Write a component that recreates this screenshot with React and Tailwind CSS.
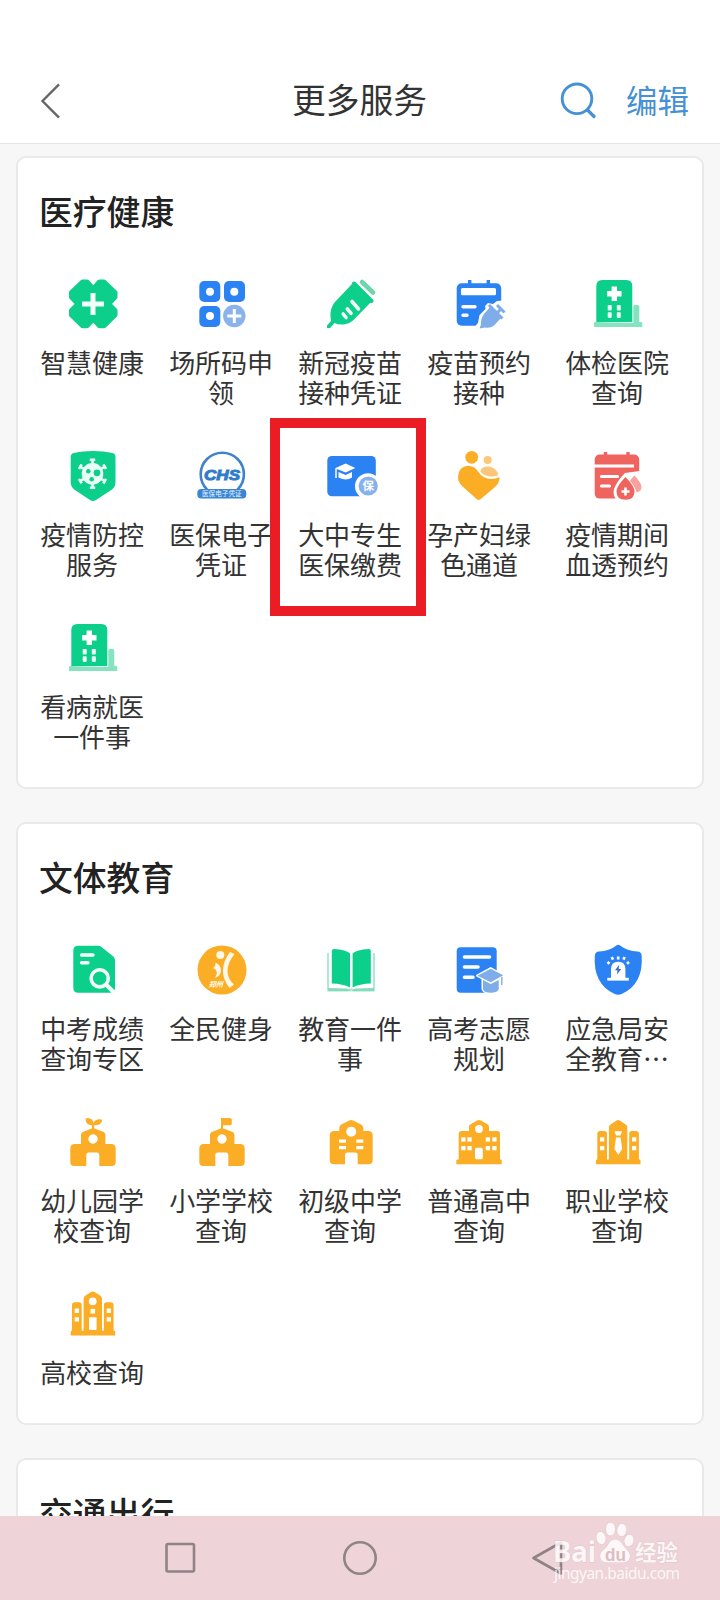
import React from 'react';

const G = '#0ccf8b';
const B = '#2b83f3';
const L = '#8ab3ec';
const O = '#fbad25';
const R = '#f0645f';

const Clover = () => (
  <>
    <path
      d="M20.500 8H25l6.300 7L37.500 8H42L53 18.500V23L46.500 30l6.500 6.500V41L42 51.700h-4.500L31.300 45 25 51.700h-4.500L9.500 41v-4.500L16 30l-6.500-7v-4.500z"
      fill={G} stroke={G} strokeWidth="5" strokeLinejoin="round"
    />
    <path d="M31 19v22M20 30h22" stroke="#f2fffa" strokeWidth="5" />
  </>
);

const CodeGrid = () => (
  <>
    <g fill={B}>
      <rect x="8.300" y="7" width="21" height="21" rx="5" />
      <rect x="33" y="7" width="21" height="21" rx="5" />
      <rect x="8.300" y="32" width="21" height="21" rx="5" />
    </g>
    <circle cx="43.300" cy="42" r="11.200" fill={L} />
    <g fill="#fff">
      <circle cx="19" cy="17.700" r="4" />
      <circle cx="43.300" cy="17.700" r="4" />
      <circle cx="19" cy="42" r="4" />
    </g>
    <path d="M43.300 35v14M36.300 42h14" stroke="#fff" strokeWidth="3" />
  </>
);

const Syringe = () => (
  <>
    <path d="M32 10L14.500 28.500Q10 34 10.500 43L11 47 7 51.500V54h3l4.500-5Q18 51 24 50.500 29 50 33 46.500L51 28z" fill={G} />
    <path d="M34 9.500L51.500 27" stroke={G} strokeWidth="4" strokeLinecap="round" />
    <path d="M42 8L53 18.500" stroke="#6fd3ab" strokeWidth="4.600" strokeLinecap="round" />
    <path d="M32 27.500l6.500 7.500M27.300 34.800l3.700 4.500M23.200 40l2.800 3.500" stroke="#f2fffa" strokeWidth="3.600" strokeLinecap="round" />
  </>
);

const CalendarShot = () => (
  <>
    <rect x="7.700" y="9.300" width="44.500" height="42.500" rx="5" fill={B} />
    <path d="M20.700 6v6M39.300 6v6" stroke={B} strokeWidth="3.400" />
    <rect x="12" y="14" width="35" height="7.300" rx="1.500" fill="#fff" />
    <path d="M14 32.700h12M14 41.300h4" stroke="#fff" strokeWidth="3.400" strokeLinecap="round" />
    <path d="M54 26.500l-6 .5-4 3-5-1-3 3 .5 3-6 6-1.500 8-4 4.500 1 3 29-2z" fill="#fff" />
    <path d="M41.500 32.500L52.500 43.500l-6.500 7Q42 54.500 36 53.500L30.500 54.500l1.500-4Q31.500 45 35 40z" fill="#7fadea" />
    <path d="M40 31l13.500 13.500M47.500 39.500l4.500-4.500M48 31l7.500 7.500" stroke="#7fadea" strokeWidth="3" />
  </>
);

const Hospital = () => (
  <>
    <path d="M46.300 49V32.500q0-1.500 1.500-1.500h3q1.500 0 1.500 1.500V48H54q1.300 0 1.300 1.300V53H7v-3.700Q7 48 8.300 48z" fill="#86e3c0" />
    <path d="M9.300 48V12q0-6 6-6h24q6 0 6 6v36z" fill={G} />
    <path d="M27.300 12.500v14.400M20.100 19.700h14.400" stroke="#fff" strokeWidth="5.400" />
    <g fill="#eafff6">
      <rect x="20.700" y="31" width="4" height="5.600" rx=".8" />
      <rect x="29.800" y="31" width="4" height="5.600" rx=".8" />
      <rect x="20.700" y="38.300" width="4" height="5.600" rx=".8" />
      <rect x="29.800" y="38.300" width="4" height="5.600" rx=".8" />
    </g>
  </>
);

const VirusShield = () => (
  <>
    <path d="M31 5C38 5 45 5.800 50.500 7q3 .8 3 4v25q0 5-3.500 7.500L34 54q-3 2-6 0L12.200 43.500Q8.700 41 8.700 36V11Q8.700 7.800 11.700 7C17 5.800 24 5 31 5z" fill={G} />
    <g stroke="#e9fff6" strokeWidth="2.600">
      <path d="M30.500 13.500v28.600M18.500 20.800l24 14M18.500 34.800l24-14" />
      <path d="M27.800 13.800h5.400M27.800 41.800h5.400M17 23l2.600-4.600M41.400 37.500l2.600-4.600M17 32.800l2.600 4.600M41.400 18.300l2.600 4.600" />
    </g>
    <circle cx="30.500" cy="27.800" r="10.800" fill="#e9fff6" />
    <circle cx="26.300" cy="25.300" r="2.300" fill={G} />
    <circle cx="35" cy="26.800" r="3.400" fill={G} />
    <circle cx="29.700" cy="33.300" r="2.300" fill={G} />
  </>
);

const Chs = () => (
  <>
    <circle cx="31.300" cy="28.300" r="21.600" fill="none" stroke="#3f83cb" strokeWidth="2.600" />
    <text x="13" y="34" fontSize="15" fontWeight="700" fontStyle="italic" textLength="36" lengthAdjust="spacingAndGlyphs" fill="#2f7cc9" stroke="#2f7cc9" strokeWidth="1" className="font-['Liberation_Sans',sans-serif]">CHS</text>
    <rect x="6.300" y="43" width="49" height="9.600" rx="4" fill="#3b86d3" />
    <text x="11" y="50.300" fontSize="6.600" textLength="39.600" fill="#e8f3ff">医保电子凭证</text>
  </>
);

const StudentCard = () => (
  <>
    <rect x="7.300" y="10" width="48.500" height="40.300" rx="4.500" fill={B} />
    <circle cx="48" cy="40.200" r="13" fill="#fff" />
    <circle cx="48.200" cy="40" r="9.600" fill="#86b1ee" />
    <text x="48.200" y="44.300" fontSize="11.500" fontWeight="700" textAnchor="middle" fill="#fff">保</text>
    <path d="M15 22.300l10.700-4.800L35.300 22l-9.600 4.400z" fill="#fff" />
    <path d="M18.500 26l7.200 3 6.300-3v5.500q-6 4-13.500 0z" fill="#fff" />
    <path d="M16 22.500V32" stroke="#fff" strokeWidth="1.500" />
  </>
);

const Maternal = () => (
  <>
    <circle cx="22.700" cy="11.300" r="6.400" fill={O} />
    <circle cx="38.700" cy="14" r="4" fill="#fcc878" />
    <path d="M31.300 25.500Q32.500 20 40 20.500 47.500 21.500 49.200 29 46 31 41.500 30.500 35 30 31.300 25.500z" fill="#fbc679" />
    <path d="M9 31Q9.300 20.500 19 19.700 25.500 19.700 29.500 26 34 33 42 33 46.500 33 50.700 31.300 50.500 37 46 41L31.500 53.300q-1.800 1.400-3.600 0L13.500 40.500Q9 36.500 9 31z" fill={O} />
  </>
);

const Dialysis = () => (
  <>
    <rect x="7.700" y="8.600" width="44.500" height="44" rx="5" fill={R} />
    <path d="M18.500 6v6M41 6v6" stroke={R} strokeWidth="3.400" />
    <path d="M7 20h40" stroke="#fff" strokeWidth="3" />
    <path d="M14.500 30.500h16M14.500 40h8" stroke="#fff" strokeWidth="3.200" strokeLinecap="round" />
    <path d="M38 27l7-1 8-1 4 16-6 14H31q-6-5-4-12 3-8 11-16z" fill="#fff" />
    <path d="M47.500 29.500q7 7.500 7 11.500 0 5-5 5-2.500-7-6.500-11 1.500-3 4.500-5.500z" fill="#f7a29e" />
    <path d="M38.500 31q9 9 9 14.500 0 8.300-9 8.300t-9-8.300Q29.500 40 38.500 31z" fill={R} />
    <path d="M38.500 41.500v8M34.500 45.500h8" stroke="#fff" strokeWidth="2.600" />
  </>
);

const ScoreSearch = () => (
  <>
    <path d="M11.300 10.700q0-5 5-5H36q2 0 3.500 1.300L51 16.200q2 1.500 2 4v28q0 4.500-4.500 4.500H16.300q-5 0-5-5z" fill={G} />
    <path d="M19.500 15h11.500M19.500 22.700H26" stroke="#f2fffa" strokeWidth="3.400" strokeLinecap="round" />
    <circle cx="37.700" cy="38.300" r="8.600" fill="none" stroke="#f2fffa" strokeWidth="3.600" />
    <path d="M44 44.500l8 8" stroke="#f2fffa" strokeWidth="4" />
  </>
);

const Fitness = () => (
  <>
    <circle cx="31" cy="30" r="24.500" fill={O} />
    <circle cx="29.300" cy="15" r="4" fill="#fff8e6" />
    <path d="M39 12l4.500 2Q36.500 23 36.500 31t6.500 13.500L38.500 48Q31.500 39 32 30q.5-10 7-18z" fill="#fff8e6" />
    <path d="M24.500 22.500q6 3 5.500 8.500-.5 5-6 7 2.500-4 1.500-7-1-2-3.500-3 3-2 2.500-5.500z" fill="#fff8e6" />
    <text x="17.500" y="46.500" fontSize="7.500" fontWeight="700" fontStyle="italic" textLength="14.500" fill="#fff8e6">郑州</text>
  </>
);

const Book = () => (
  <>
    <path d="M8 13v37.300h19.500q3.500 0 3.500-2 0 2 3.500 2H54V13" fill="none" stroke="#a5e8d0" strokeWidth="1.800" />
    <path d="M8 48l19 .5 4 2.500 4-2.500 19-.5v3.300H8z" fill="#84dcbc" />
    <path d="M11.800 10.500Q11.800 9 14 9q12 .8 16 4.500V47.500Q23 43.800 11.800 43.500z" fill={G} />
    <path d="M50.800 10.500Q50.800 9 48.600 9q-12 .8-16 4.500V47.500Q39.600 43.800 50.800 43.500z" fill={G} />
  </>
);

const Volunteer = () => (
  <>
    <rect x="7.700" y="7.300" width="40" height="45.400" rx="4" fill={B} />
    <path d="M15.500 17h25M15.500 27h13.500M15.500 37.300h8.500" stroke="#fff" strokeWidth="3.600" strokeLinecap="round" />
    <path d="M28 35.700l13.700-7.600L54 35l-4.500 3.500V49q-1 4-8 4t-8-4V38.500z" fill="#fff" stroke="#fff" strokeWidth="2" strokeLinejoin="round" />
    <path d="M34 40l7.700 4 8-4v9.500Q48 52.700 41.700 52.700T34 49.500z" fill="#7fadea" />
    <path d="M28.500 35.700l13.200-7 12.500 6.500-12.500 7z" fill="#7fadea" />
    <path d="M52.800 37v8" stroke="#7fadea" strokeWidth="1.400" />
  </>
);

const SirenShield = () => (
  <>
    <path d="M31.200 4.700q1 0 2.300 1 6.500 5.200 17 5.800 2 .1 3 1.200 1 1.100 1.200 3 1.800 28-19.500 38-2 1-4 1t-4-1Q6 43.700 7.800 15.700q.2-1.900 1.200-3t3-1.200q10.500-.6 17-5.800 1.200-1 2.200-1z" fill={B} />
    <path d="M24 38v-9q0-7.300 7.200-7.300T38.400 29v9z" fill="#fff" />
    <path d="M20.300 39.200h21.500" stroke="#fff" strokeWidth="2.800" />
    <path d="M31.200 16.500v3M24.700 17l1.300 2.600M37.700 17l-1.300 2.600M20.500 22l2 1.800M42 22l-2 1.800" stroke="#fff" strokeWidth="2.600" />
    <path d="M32 25l-4 5.300h2.500L30 34.500l4.300-5.600h-2.600z" fill="#3572c4" />
  </>
);

const SchoolBody = () => (
  <path
    fillRule="evenodd"
    d="M19 32V23q0-2 1.700-3l9-3.600q1.500-.6 3 0l9 3.600q1.700 1 1.700 3v9h5.800q4.500 0 4.500 4.500V50q0 4-4 4H37.300V43q0-2.500-2.500-2.500h-8q-2.500 0-2.500 2.500v11H12.300q-4 0-4-4V36.500Q8.300 32 12.800 32zM31 22.300a4.700 4.700 0 1 0 .01 0z"
    fill={O}
  />
);

const Kindergarten = () => (
  <>
    <SchoolBody />
    <path d="M31 18v-6" stroke={O} strokeWidth="2" />
    <path d="M31.500 13Q24 14 23.500 7.500 23.500 6 25.500 6q5.500.3 6 5 1.500-4 7-3.700 2 .2 1.500 2Q38 14 31.500 13z" fill={O} />
  </>
);

const Primary = () => (
  <>
    <SchoolBody />
    <path d="M31 18V6" stroke={O} strokeWidth="2" />
    <rect x="30.300" y="6" width="10.500" height="7.200" rx="1.800" fill={O} />
  </>
);

const Junior = () => (
  <>
    <path
      fillRule="evenodd"
      d="M19.300 19v-3q0-2.500 2-3.500l8-4q1.900-.9 3.800 0l8 4q2.200 1 2.200 3.500v3h4.900q4.500 0 4.500 4.500V48q0 4.300-4.300 4.300H37.700V43q0-2.500-2.500-2.500h-7.700Q25 40.500 25 43v9.300H14Q9.700 52.300 9.700 48V23.500Q9.700 19 14.200 19zM31.200 14.700a5 5 0 1 0 .01 0z"
      fill={O}
    />
    <path d="M19 29.200h7M36.300 29.200h7M19 35.700h7M36.300 35.700h7" stroke="#fff" strokeWidth="3.200" />
  </>
);

const Senior = () => (
  <>
    <path d="M20 19v-4q0-2 1.600-2.800L28 8.600q2-1 4 0l6.400 3.600Q40 13 40 15v4h8q3 0 3 3v25.500h.7q1 0 1 1v3.800H7.300v-3.800q0-1 1-1h1.400V22q0-3 3-3z" fill={O} />
    <circle cx="30" cy="17" r="3.900" fill="#fff" />
    <g fill="#fff">
      <rect x="12.200" y="25.300" width="4.300" height="4.300" />
      <rect x="18.400" y="25.300" width="4.300" height="4.300" />
      <rect x="36.700" y="25.300" width="4.300" height="4.300" />
      <rect x="43.300" y="25.300" width="4.300" height="4.300" />
      <rect x="12.200" y="34" width="4.300" height="4.300" />
      <rect x="18.400" y="34" width="4.300" height="4.300" />
      <rect x="36.700" y="34" width="4.300" height="4.300" />
      <rect x="43.300" y="34" width="4.300" height="4.300" />
      <rect x="26" y="35.700" width="7.800" height="11.600" rx="1.500" />
    </g>
  </>
);

const Towers = () => (
  <>
    <path d="M10.300 47.500V22q0-3 3-3h4q2.700 0 2.700 3v25.500h1.900V15.500q0-2 1.600-3l5.700-3.800q1.900-1.200 3.800 0l5.700 3.800q1.600 1 1.600 3v32h1.900V22q0-3 2.700-3h4q3 0 3 3v25.500h.6q1 0 1 1v3.800H9v-3.800q0-1 1-1z" fill={O} />
    <path d="M13 25.300h4.300v4.300H13zM13 34h4.300v4.300H13zM45 25.300h4.300v4.300H45zM45 34h4.300v4.300H45z" fill="#fff" />
  </>
);

const Vocational = () => (
  <>
    <Towers />
    <path d="M27.500 19.300h7.600L33.500 23.400h-4.400zM29 25.500h4.600l1.600 11.500-3.900 6-3.900-6z" fill="#fff" />
  </>
);

const University = () => (
  <g transform="translate(-.3 -.7)">
    <Towers />
    <circle cx="31" cy="18" r="3.900" fill="#fff" />
    <path d="M28.800 25.600h4.600v4.600h-4.600z" fill="#fff" />
    <rect x="27.300" y="34" width="7.600" height="12.700" rx="1" fill="#fff" />
  </g>
);

const medical = [
  { icon: Clover, label: '智慧健康' },
  { icon: CodeGrid, label: '场所码申领' },
  { icon: Syringe, label: '新冠疫苗接种凭证' },
  { icon: CalendarShot, label: '疫苗预约接种' },
  { icon: Hospital, label: '体检医院查询' },
  { icon: VirusShield, label: '疫情防控服务' },
  { icon: Chs, label: '医保电子凭证' },
  { icon: StudentCard, label: '大中专生医保缴费', marked: true },
  { icon: Maternal, label: '孕产妇绿色通道' },
  { icon: Dialysis, label: '疫情期间血透预约' },
  { icon: Hospital, label: '看病就医一件事' },
];

const education = [
  { icon: ScoreSearch, label: '中考成绩查询专区' },
  { icon: Fitness, label: '全民健身' },
  { icon: Book, label: '教育一件事' },
  { icon: Volunteer, label: '高考志愿规划' },
  { icon: SirenShield, label: '应急局安全教育⋯' },
  { icon: Kindergarten, label: '幼儿园学校查询' },
  { icon: Primary, label: '小学学校查询' },
  { icon: Junior, label: '初级中学查询' },
  { icon: Senior, label: '普通高中查询' },
  { icon: Vocational, label: '职业学校查询' },
  { icon: University, label: '高校查询' },
];

function Service({ icon: Icon, label, marked }) {
  return (
    <div className="relative flex flex-col items-center">
      <svg width="61" height="60" viewBox="0 0 61 60" className="block shrink-0">
        <Icon />
      </svg>
      <div className="mb-px mr-px mt-[13px] w-[105px] break-all text-center text-[26px] leading-[30px] tracking-[-0.1px] text-[#333]">{label}</div>
      {marked && <div className="absolute -left-4 -top-7 z-10 h-[198px] w-[156px] border-[10px] border-[#ea1c24]" />}
    </div>
  );
}

function Section({ title, items }) {
  return (
    <section className="shrink-0 rounded-[10px] border-2 border-[#e9e9e9] bg-white pb-[35px] pl-[10px] pt-[33px]">
      <h2 className="pl-[11px] text-[33.800px] font-medium leading-[40px] text-[#222]">{title}</h2>
      <div className="mt-[43px] grid grid-cols-[129px_129px_129px_129px_147px] gap-y-[38px]">
        {items.map((item) => (
          <Service key={item.label} {...item} />
        ))}
      </div>
    </section>
  );
}

function Watermark() {
  return (
    <svg width="136" height="66" viewBox="0 0 136 66" className="absolute left-[548px] top-[4px]">
      <g fill="#fff" fillOpacity=".82" stroke="#d9b9be" strokeOpacity=".5" strokeWidth="1" paintOrder="stroke">
        <text x="5" y="42" fontSize="28" fontWeight="700" textLength="43" lengthAdjust="spacingAndGlyphs" className="font-['Noto_Sans',sans-serif]">Bai</text>
        <ellipse cx="53" cy="18" rx="4.600" ry="6.300" transform="rotate(-12 53 18)" />
        <ellipse cx="62.500" cy="9" rx="4.600" ry="6.600" />
        <ellipse cx="73.800" cy="10" rx="4.600" ry="6.400" transform="rotate(8 73.800 10)" />
        <ellipse cx="81" cy="20.500" rx="4.600" ry="6" transform="rotate(12 81 20.500)" />
        <path d="M67 19.500q4.500 0 7.500 5 2.500 3.500 5.500 6.500 3.500 4.500 1 8.500-2.500 3.500-7 3H59.500q-5.500 0-7-4-1.500-4.500 2.500-8 3.500-2.500 5.500-6.500 2.500-4.500 6.500-4.500z" />
        <text x="87" y="39.500" fontSize="21.500" fontWeight="700">经验</text>
        <text x="6" y="59" fontSize="15.500" textLength="126" stroke="none" className="font-['Noto_Sans',sans-serif]">jingyan.baidu.com</text>
      </g>
      <text x="57" y="40.500" fontSize="18.500" fontWeight="700" textLength="21" lengthAdjust="spacingAndGlyphs" fill="#dfbcc2" className="font-['Liberation_Sans',sans-serif]">du</text>
    </svg>
  );
}

export default function App() {
  return (
    <div className="flex h-[1600px] w-[720px] flex-col overflow-hidden bg-[#f7f7f7] font-['Noto_Sans_CJK_SC',sans-serif]">
      <header className="grid h-[144px] shrink-0 grid-cols-[1fr_auto_1fr] items-center border-b border-[#e5e5e5] bg-white pl-[30px] pr-[31px] pt-[58px]">
        <svg width="26" height="40" viewBox="0 0 26 40" fill="none" className="ml-2 block">
          <path d="M21 3.300L4.500 20 21 36.700" stroke="#666" strokeWidth="2.400" />
        </svg>
        <h1 className="pb-[3px] text-[33.800px] leading-[40px] text-[#333]">更多服务</h1>
        <div className="flex items-center justify-end gap-[29px] text-[#4690d4]">
          <svg width="40" height="40" viewBox="0 0 40 40" fill="none" stroke="currentColor" className="block">
            <circle cx="20" cy="17.800" r="14.800" strokeWidth="2.900" />
            <path d="M30.500 29l6.500 6.500" strokeWidth="3.200" strokeLinecap="round" />
          </svg>
          <span className="pb-[3px] text-[31.500px] leading-[40px]">编辑</span>
        </div>
      </header>

      <main className="flex min-h-0 flex-1 flex-col gap-[33px] overflow-hidden px-4 pt-3">
        <Section title="医疗健康" items={medical} />
        <Section title="文体教育" items={education} />
        <Section title="交通出行" items={[]} />
      </main>

      <nav className="relative flex h-[84px] shrink-0 items-center bg-[#eed3d8]">
        <svg width="720" height="84" viewBox="0 0 720 84" fill="none" stroke="#8f8386" strokeWidth="2.600" className="block">
          <rect x="166.500" y="28" width="27.500" height="27.500" rx="1.500" />
          <circle cx="360" cy="42" r="15.700" />
          <path d="M533.500 42L561 26.500v31z" strokeLinejoin="round" />
        </svg>
        <Watermark />
      </nav>
    </div>
  );
}
